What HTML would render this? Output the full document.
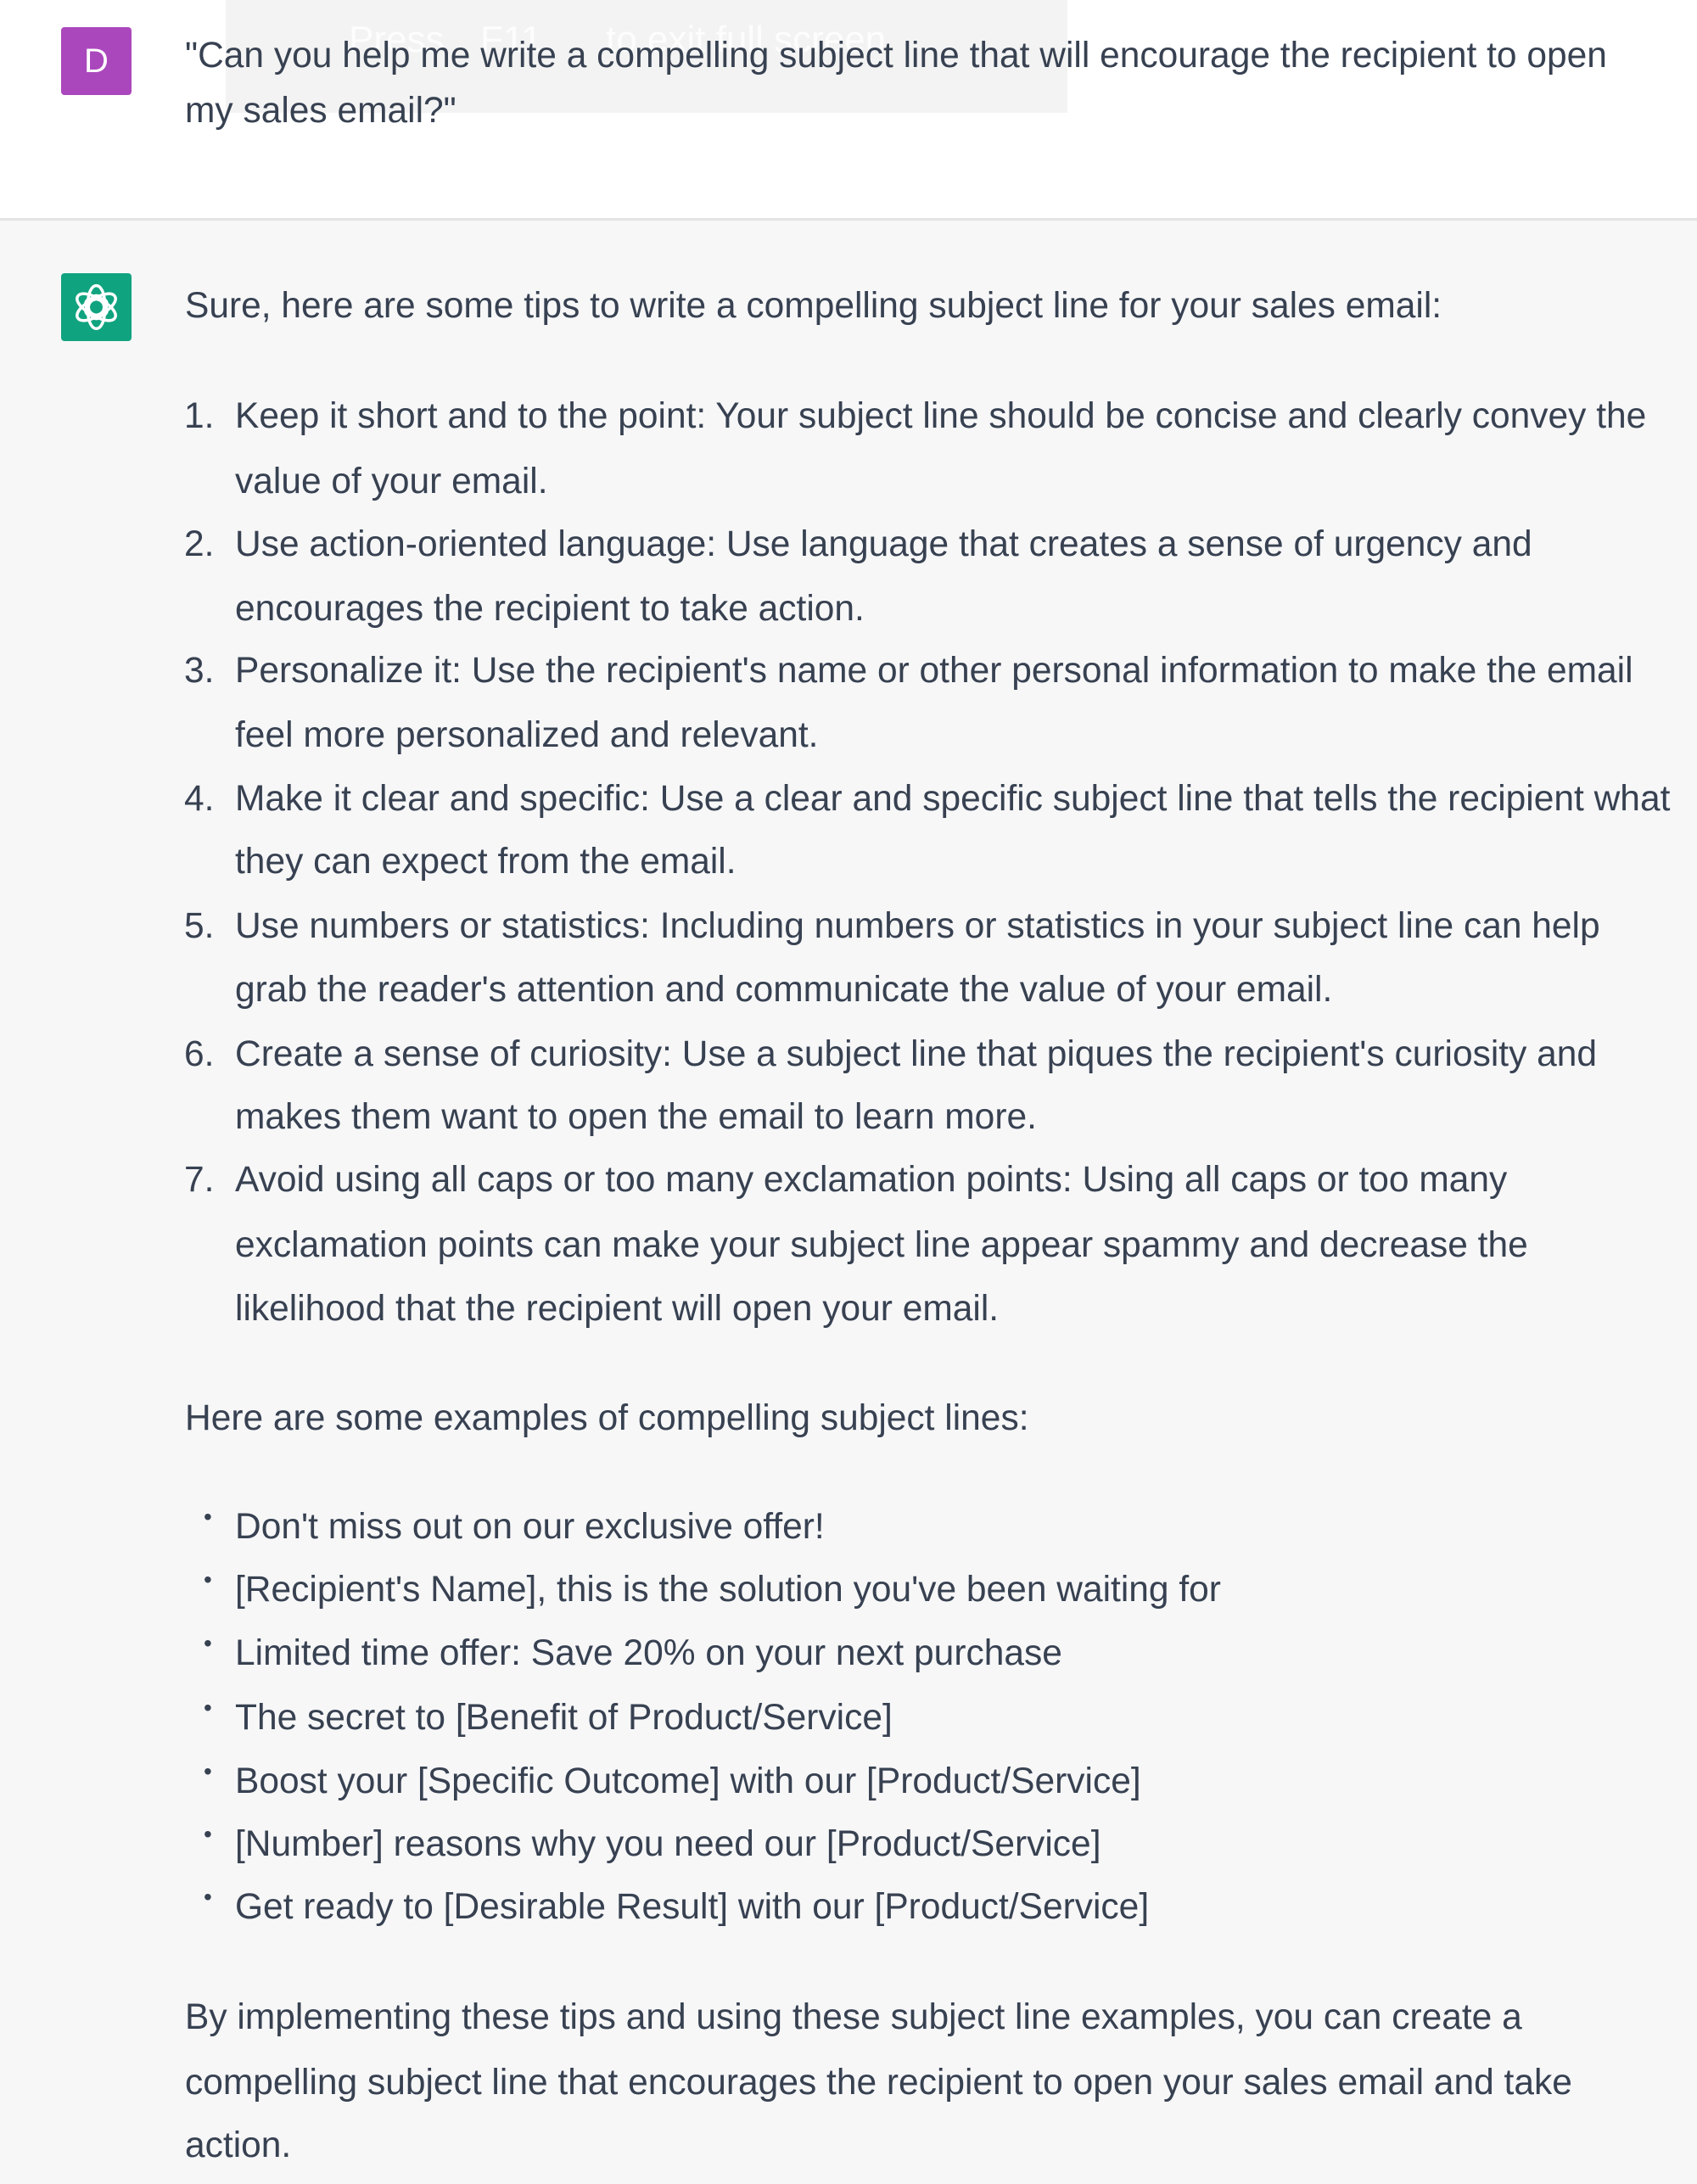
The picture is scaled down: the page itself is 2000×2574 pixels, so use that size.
<!DOCTYPE html>
<html><head><meta charset="utf-8"><style>
body{margin:0;width:2000px;height:2574px;position:relative;overflow:hidden;background:#f7f7f8;font-family:"Liberation Sans",sans-serif;color:#374151}
.top{position:absolute;left:0;top:0;width:2000px;height:257px;background:#fff;border-bottom:3px solid #e3e3e5}
.l{position:absolute;white-space:nowrap;font-size:42.5px;line-height:76px;height:76px}
.av{position:absolute;left:72px;width:83px;height:80px;border-radius:4px}
.n{position:absolute;left:-60px}
.b{position:absolute;left:-37px;font-size:28px;top:-12px}
.fs{position:absolute;left:266px;top:0;width:992px;height:133px;background:rgba(238,238,238,.7)}
.fs span{position:absolute;color:rgba(255,255,255,.8);font-size:44px;top:22px}
</style></head><body>
<div class="top"></div>
<div class="fs"><span style="left:145px">Press</span><span style="left:300px">F11</span><span style="left:448px">to exit full screen</span></div>
<div class="av" style="top:32px;background:#ab47bc;color:#fff;font-size:40px;text-align:center;line-height:80px">D</div>
<div class="av" style="top:322px;background:#10a37f">
<svg width="83" height="80" viewBox="0 0 41 41"><g fill="none" stroke="#fff" stroke-width="1.8"><g transform="translate(20.5,20.5)">
<ellipse rx="5" ry="10" transform="rotate(0) translate(0,-3)"/>
<ellipse rx="5" ry="10" transform="rotate(60) translate(0,-3)"/>
<ellipse rx="5" ry="10" transform="rotate(120) translate(0,-3)"/>
<ellipse rx="5" ry="10" transform="rotate(180) translate(0,-3)"/>
<ellipse rx="5" ry="10" transform="rotate(240) translate(0,-3)"/>
<ellipse rx="5" ry="10" transform="rotate(300) translate(0,-3)"/></g></g></svg></div>

<div class="l" style="left:218px;top:28px">"Can you help me write a compelling subject line that will encourage the recipient to open</div>
<div class="l" style="left:218px;top:93px">my sales email?"</div>

<div class="l" style="left:218px;top:323px">Sure, here are some tips to write a compelling subject line for your sales email:</div>

<div class="l" style="left:277px;top:453px"><span class="n">1.</span>Keep it short and to the point: Your subject line should be concise and clearly convey the</div>
<div class="l" style="left:277px;top:530px">value of your email.</div>
<div class="l" style="left:277px;top:604px"><span class="n">2.</span>Use action-oriented language: Use language that creates a sense of urgency and</div>
<div class="l" style="left:277px;top:680px">encourages the recipient to take action.</div>
<div class="l" style="left:277px;top:753px"><span class="n">3.</span>Personalize it: Use the recipient's name or other personal information to make the email</div>
<div class="l" style="left:277px;top:829px">feel more personalized and relevant.</div>
<div class="l" style="left:277px;top:904px"><span class="n">4.</span>Make it clear and specific: Use a clear and specific subject line that tells the recipient what</div>
<div class="l" style="left:277px;top:978px">they can expect from the email.</div>
<div class="l" style="left:277px;top:1054px"><span class="n">5.</span>Use numbers or statistics: Including numbers or statistics in your subject line can help</div>
<div class="l" style="left:277px;top:1129px">grab the reader's attention and communicate the value of your email.</div>
<div class="l" style="left:277px;top:1205px"><span class="n">6.</span>Create a sense of curiosity: Use a subject line that piques the recipient's curiosity and</div>
<div class="l" style="left:277px;top:1279px">makes them want to open the email to learn more.</div>
<div class="l" style="left:277px;top:1353px"><span class="n">7.</span>Avoid using all caps or too many exclamation points: Using all caps or too many</div>
<div class="l" style="left:277px;top:1430px">exclamation points can make your subject line appear spammy and decrease the</div>
<div class="l" style="left:277px;top:1505px">likelihood that the recipient will open your email.</div>

<div class="l" style="left:218px;top:1634px">Here are some examples of compelling subject lines:</div>

<div class="l" style="left:277px;top:1762px"><span class="b">•</span>Don't miss out on our exclusive offer!</div>
<div class="l" style="left:277px;top:1836px"><span class="b">•</span>[Recipient's Name], this is the solution you've been waiting for</div>
<div class="l" style="left:277px;top:1911px"><span class="b">•</span>Limited time offer: Save 20% on your next purchase</div>
<div class="l" style="left:277px;top:1987px"><span class="b">•</span>The secret to [Benefit of Product/Service]</div>
<div class="l" style="left:277px;top:2062px"><span class="b">•</span>Boost your [Specific Outcome] with our [Product/Service]</div>
<div class="l" style="left:277px;top:2136px"><span class="b">•</span>[Number] reasons why you need our [Product/Service]</div>
<div class="l" style="left:277px;top:2210px"><span class="b">•</span>Get ready to [Desirable Result] with our [Product/Service]</div>

<div class="l" style="left:218px;top:2340px">By implementing these tips and using these subject line examples, you can create a</div>
<div class="l" style="left:218px;top:2417px">compelling subject line that encourages the recipient to open your sales email and take</div>
<div class="l" style="left:218px;top:2491px">action.</div>
</body></html>
